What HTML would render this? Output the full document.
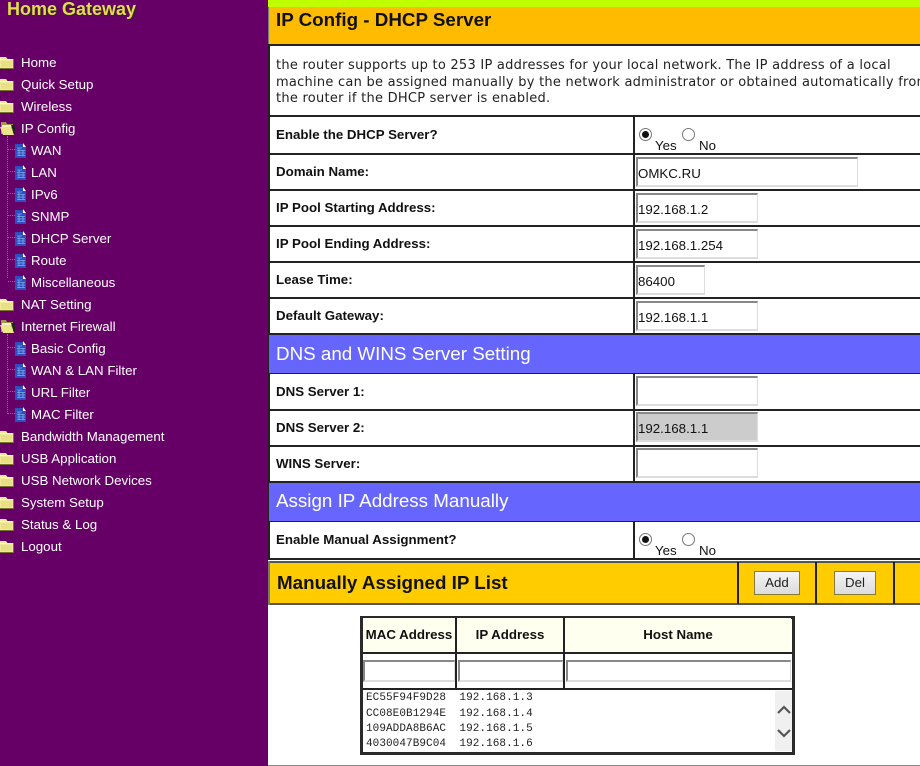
<!DOCTYPE html>
<html><head><meta charset="utf-8"><style>
html,body{margin:0;padding:0}
body{width:920px;height:766px;overflow:hidden;position:relative;background:#fff;font-family:"Liberation Sans",Arial,sans-serif;color:#000}
.a{position:absolute;white-space:nowrap}
#side{position:absolute;left:0;top:0;width:268px;height:766px;background:#660066}
.m{position:absolute;color:#fff;font-size:13.3px;line-height:16px;white-space:nowrap;margin-top:1px}
.fo{position:absolute;left:0;width:14px;height:12px}
.dc{position:absolute;left:15px;width:12px;height:15px}
.dot{position:absolute;border-top:1px dotted #a060a0;height:0;left:8px;width:7px}
.ln{position:absolute;background:#222}
.lb{position:absolute;left:276px;font-weight:bold;font-size:13.3px;line-height:16px;white-space:nowrap;color:#111;margin-top:1px}
.i{position:absolute;box-sizing:border-box;border-top:2px solid #888;border-left:2px solid #888;border-right:1px solid #ddd;border-bottom:2px solid #ddd;background:#fff;font-size:13.3px;line-height:21px;padding-left:0;color:#111;height:30px;padding-top:4px;white-space:nowrap}
.bl{position:absolute;left:269px;width:651px;background:#6666ff;color:#fff;font-size:18.800px;line-height:24px}
.bl span{position:absolute;left:7px;white-space:nowrap}
.r{position:absolute;width:13px;height:13px;box-sizing:border-box;border:1px solid #777;border-radius:50%;background:#fff}
.r.c:after{content:"";position:absolute;left:2px;top:2px;width:7px;height:7px;border-radius:50%;background:#111}
.t{position:absolute;font-size:13.3px;line-height:16px;color:#111;margin-top:1px}
.btn{position:absolute;box-sizing:border-box;border:1px solid #8a7a3a;background:linear-gradient(#f4f4f4,#dcdcdc);font-size:13.3px;text-align:center;height:24px;line-height:21px;color:#222}
.h{position:absolute;top:618px;height:34px;background:#fffff0;font-weight:bold;font-size:13.3px;line-height:34px;text-align:center;color:#111}
.l{position:absolute;left:366px;font-family:"Liberation Mono",monospace;font-size:11px;line-height:14px;letter-spacing:.07px;color:#222;white-space:pre}
</style></head><body>
<svg width="0" height="0" style="position:absolute"><defs>
<symbol id="f" viewBox="0 0 14 12"><path d="M0 0h6l1.500 2H13v9H0z" fill="#f0e89a"/><path d="M0 2h13v1H0z" fill="#fffbd0"/><path d="M0 11h14v1H0zM13 2h1v10h-1z" fill="#7a7030"/><path d="M1 4h11v6H1z" fill="#e8e084"/></symbol>
<symbol id="o" viewBox="0 0 15 13"><path d="M1 0h5l1 2h6v10H1z" fill="#a09848"/><path d="M0 5h11l3 8H3z" fill="#eee488"/><path d="M2 3h10v2H2z" fill="#f6f2c0"/><path d="M11 3l3 9h1V3z" fill="#222"/></symbol>
<symbol id="d" viewBox="0 0 12 15"><path d="M0 1h8l3 3v11H0z" fill="#2c50c0"/><path d="M8 0l3 4H8z" fill="#fff"/><path d="M2 5h5M2 7.500h8M2 10h8M2 12.500h8M4 5v8M8 7v6" stroke="#7ea8e8" stroke-width=".8" fill="none"/></symbol>
</defs></svg>
<div id="side">
<div class="a" style="left:7px;top:-2px;font-weight:bold;font-size:18px;line-height:22px;color:#e4dc50;text-shadow:1px 1px 1px #2a2a10">Home Gateway</div>
<div style="position:absolute;left:7px;top:136px;height:142px;border-left:1px dotted #a060a0"></div>
<div style="position:absolute;left:7px;top:334px;height:80px;border-left:1px dotted #a060a0"></div>

<svg class="fo" style="top:57px"><use href="#f"/></svg><div class="m" style="left:21px;top:54px">Home</div>
<svg class="fo" style="top:79px"><use href="#f"/></svg><div class="m" style="left:21px;top:76px">Quick Setup</div>
<svg class="fo" style="top:101px"><use href="#f"/></svg><div class="m" style="left:21px;top:98px">Wireless</div>
<svg class="fo" style="top:122px;width:15px;height:13px"><use href="#o"/></svg><div class="m" style="left:21px;top:120px">IP Config</div>

<div class="dot" style="top:149px"></div><svg class="dc" style="top:143px"><use href="#d"/></svg><div class="m" style="left:31px;top:142px">WAN</div>
<div class="dot" style="top:171px"></div><svg class="dc" style="top:165px"><use href="#d"/></svg><div class="m" style="left:31px;top:164px">LAN</div>
<div class="dot" style="top:193px"></div><svg class="dc" style="top:187px"><use href="#d"/></svg><div class="m" style="left:31px;top:186px">IPv6</div>
<div class="dot" style="top:215px"></div><svg class="dc" style="top:209px"><use href="#d"/></svg><div class="m" style="left:31px;top:208px">SNMP</div>
<div class="dot" style="top:237px"></div><svg class="dc" style="top:231px"><use href="#d"/></svg><div class="m" style="left:31px;top:230px">DHCP Server</div>
<div class="dot" style="top:259px"></div><svg class="dc" style="top:253px"><use href="#d"/></svg><div class="m" style="left:31px;top:252px">Route</div>
<div class="dot" style="top:281px"></div><svg class="dc" style="top:275px"><use href="#d"/></svg><div class="m" style="left:31px;top:274px">Miscellaneous</div>

<svg class="fo" style="top:299px"><use href="#f"/></svg><div class="m" style="left:21px;top:296px">NAT Setting</div>
<svg class="fo" style="top:320px;width:15px;height:13px"><use href="#o"/></svg><div class="m" style="left:21px;top:318px">Internet Firewall</div>

<div class="dot" style="top:347px"></div><svg class="dc" style="top:341px"><use href="#d"/></svg><div class="m" style="left:31px;top:340px">Basic Config</div>
<div class="dot" style="top:369px"></div><svg class="dc" style="top:363px"><use href="#d"/></svg><div class="m" style="left:31px;top:362px">WAN &amp; LAN Filter</div>
<div class="dot" style="top:391px"></div><svg class="dc" style="top:385px"><use href="#d"/></svg><div class="m" style="left:31px;top:384px">URL Filter</div>
<div class="dot" style="top:413px"></div><svg class="dc" style="top:407px"><use href="#d"/></svg><div class="m" style="left:31px;top:406px">MAC Filter</div>

<svg class="fo" style="top:431px"><use href="#f"/></svg><div class="m" style="left:21px;top:428px">Bandwidth Management</div>
<svg class="fo" style="top:453px"><use href="#f"/></svg><div class="m" style="left:21px;top:450px">USB Application</div>
<svg class="fo" style="top:475px"><use href="#f"/></svg><div class="m" style="left:21px;top:472px">USB Network Devices</div>
<svg class="fo" style="top:497px"><use href="#f"/></svg><div class="m" style="left:21px;top:494px">System Setup</div>
<svg class="fo" style="top:519px"><use href="#f"/></svg><div class="m" style="left:21px;top:516px">Status &amp; Log</div>
<svg class="fo" style="top:541px"><use href="#f"/></svg><div class="m" style="left:21px;top:538px">Logout</div>
</div>

<div style="position:absolute;left:268px;top:0;width:652px;height:7px;background:#bfff00"></div>
<div style="position:absolute;left:268px;top:7px;width:652px;height:37px;background:#ffbb00"></div>
<div class="a" style="left:276px;top:9px;font-weight:bold;font-size:18.800px;line-height:22px;color:#111">IP Config - DHCP Server</div>
<div class="ln" style="left:268px;top:44px;width:652px;height:2px"></div>
<div class="ln" style="left:268px;top:7px;width:1px;height:38px;background:#777"></div>
<div class="ln" style="left:268px;top:44px;width:2px;height:516px"></div>

<div class="a" style="left:276px;top:58px;font-family:'DejaVu Sans',sans-serif;font-size:13px;line-height:16.500px;color:#222;letter-spacing:.25px">the router supports up to 253 IP addresses for your local network. The IP address of a local<br>machine can be assigned manually by the network administrator or obtained automatically from<br>the router if the DHCP server is enabled.</div>

<div class="ln" style="left:268px;top:115px;width:652px;height:2px"></div>
<div class="ln" style="left:268px;top:153px;width:652px;height:2px"></div>
<div class="ln" style="left:268px;top:189px;width:652px;height:2px"></div>
<div class="ln" style="left:268px;top:225px;width:652px;height:2px"></div>
<div class="ln" style="left:268px;top:261px;width:652px;height:2px"></div>
<div class="ln" style="left:268px;top:297px;width:652px;height:2px"></div>
<div class="ln" style="left:268px;top:333px;width:652px;height:2px"></div>
<div class="ln" style="left:268px;top:373px;width:652px;height:1px"></div>
<div class="ln" style="left:268px;top:409px;width:652px;height:2px"></div>
<div class="ln" style="left:268px;top:445px;width:652px;height:2px"></div>
<div class="ln" style="left:268px;top:481px;width:652px;height:2px"></div>
<div class="ln" style="left:268px;top:521px;width:652px;height:1px"></div>
<div class="ln" style="left:268px;top:558px;width:652px;height:2px"></div>

<div class="ln" style="left:633px;top:116px;width:2px;height:218px"></div>
<div class="ln" style="left:633px;top:374px;width:2px;height:108px"></div>
<div class="ln" style="left:633px;top:522px;width:2px;height:37px"></div>

<div class="lb" style="top:126px">Enable the DHCP Server?</div>
<div class="r c" style="left:639px;top:128px"></div><div class="t" style="left:655px;top:137px">Yes</div>
<div class="r" style="left:682px;top:128px"></div><div class="t" style="left:699px;top:137px">No</div>

<div class="lb" style="top:163px">Domain Name:</div><div class="i" style="left:636px;top:157px;width:222px">OMKC.RU</div>
<div class="lb" style="top:199px">IP Pool Starting Address:</div><div class="i" style="left:636px;top:193px;width:122px">192.168.1.2</div>
<div class="lb" style="top:235px">IP Pool Ending Address:</div><div class="i" style="left:636px;top:229px;width:122px">192.168.1.254</div>
<div class="lb" style="top:271px">Lease Time:</div><div class="i" style="left:636px;top:265px;width:69px">86400</div>
<div class="lb" style="top:307px">Default Gateway:</div><div class="i" style="left:636px;top:301px;width:122px">192.168.1.1</div>

<div class="bl" style="top:335px;height:38px"><span style="top:7px">DNS and WINS Server Setting</span></div>
<div class="lb" style="top:383px">DNS Server 1:</div><div class="i" style="left:636px;top:376px;width:122px"></div>
<div class="lb" style="top:419px">DNS Server 2:</div><div class="i" style="left:636px;top:412px;width:122px;background:#ccc">192.168.1.1</div>
<div class="lb" style="top:455px">WINS Server:</div><div class="i" style="left:636px;top:448px;width:122px"></div>

<div class="bl" style="top:483px;height:38px"><span style="top:6px">Assign IP Address Manually</span></div>
<div class="lb" style="top:531px">Enable Manual Assignment?</div>
<div class="r c" style="left:639px;top:533px"></div><div class="t" style="left:655px;top:542px">Yes</div>
<div class="r" style="left:682px;top:533px"></div><div class="t" style="left:699px;top:542px">No</div>

<div style="position:absolute;left:268px;top:560px;width:652px;height:46px;background:#fff"></div>
<div style="position:absolute;left:269px;top:562px;width:651px;height:41px;background:#ffcc00"></div>
<div class="ln" style="left:268px;top:561px;width:652px;height:2px;background:#555"></div>
<div class="ln" style="left:268px;top:603px;width:652px;height:2px;background:#555"></div>
<div class="ln" style="left:268px;top:561px;width:2px;height:44px;background:#777"></div>
<div class="ln" style="left:737px;top:562px;width:2px;height:42px"></div>
<div class="ln" style="left:815px;top:562px;width:2px;height:42px"></div>
<div class="ln" style="left:893px;top:562px;width:2px;height:42px"></div>
<div class="a" style="left:277px;top:571px;font-weight:bold;font-size:18.800px;line-height:24px;color:#111">Manually Assigned IP List</div>
<div class="btn" style="left:754px;top:571px;width:46px">Add</div>
<div class="btn" style="left:834px;top:571px;width:42px">Del</div>

<div style="position:absolute;left:360px;top:616px;width:435px;height:139px;box-sizing:border-box;border:3px solid #2a2a2a;background:#fff"></div>
<div class="h" style="left:363px;width:92px">MAC Address</div>
<div class="h" style="left:457px;width:106px">IP Address</div>
<div class="h" style="left:565px;width:226px">Host Name</div>
<div class="ln" style="left:455px;top:618px;width:2px;height:70px"></div>
<div class="ln" style="left:563px;top:618px;width:2px;height:70px"></div>
<div class="ln" style="left:363px;top:652px;width:429px;height:2px"></div>
<div class="ln" style="left:363px;top:688px;width:429px;height:2px"></div>
<div class="i" style="left:363px;top:660px;width:92px;height:22px;padding:0"></div>
<div class="i" style="left:458px;top:660px;width:105px;height:22px;padding:0"></div>
<div class="i" style="left:566px;top:660px;width:225px;height:22px;padding:0"></div>

<div style="position:absolute;left:775px;top:691px;width:17px;height:60px;background:#f0f0f0"></div>
<svg style="position:absolute;left:776px;top:704px" width="16" height="36" viewBox="0 0 16 36"><path d="M2 9l6-6 6 6M2 26l6 6 6-6" stroke="#555" stroke-width="2.200" fill="none"/></svg>
<div class="l" style="top:691px">EC55F94F9D28  192.168.1.3</div>
<div class="l" style="top:707px">CC08E0B1294E  192.168.1.4</div>
<div class="l" style="top:722px">109ADDA8B6AC  192.168.1.5</div>
<div class="l" style="top:737px">4030047B9C04  192.168.1.6</div>

<div style="position:absolute;left:268px;top:765px;width:652px;height:1px;background:#888"></div>
</body></html>
